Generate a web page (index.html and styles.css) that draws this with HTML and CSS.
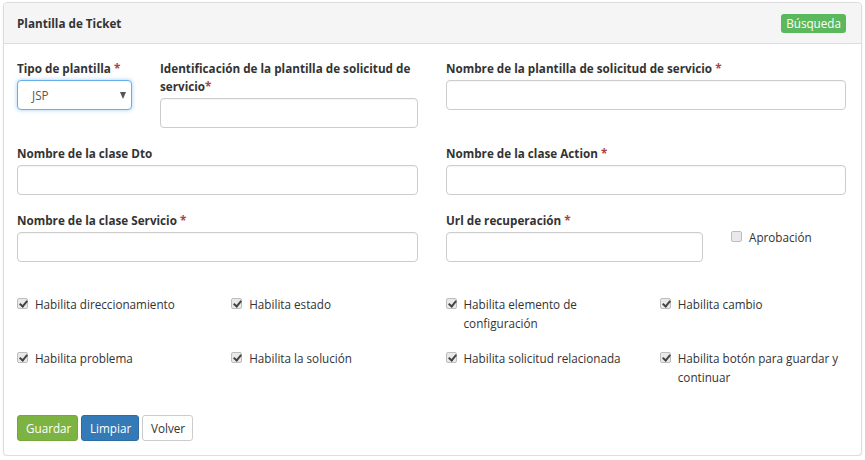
FILE: index.html
```html
<!DOCTYPE html>
<html lang="es">
<head>
<meta charset="utf-8">
<title>Plantilla de Ticket</title>
<link rel="stylesheet" href="styles.css">
</head>
<body>
<div class="panel">
  <div class="panel-heading">
    <span class="panel-title">Plantilla de Ticket</span>
    <span class="badge-search">Búsqueda</span>
  </div>
  <div class="panel-body">
    <div class="row">
      <div class="split split-left">
        <div class="field">
          <label class="lbl">Tipo de plantilla <span class="req">*</span></label>
          <div class="select"><span>JSP</span><span class="caret"></span></div>
        </div>
        <div class="field">
          <label class="lbl"><span class="lbl-line">Identificación de la plantilla de solicitud de</span> <span class="lbl-line">servicio<span class="req">*</span></span></label>
          <div class="input"></div>
        </div>
      </div>
      <div class="field">
        <label class="lbl">Nombre de la plantilla de solicitud de servicio <span class="req">*</span></label>
        <div class="input"></div>
      </div>
    </div>
    <div class="row">
      <div class="field">
        <label class="lbl">Nombre de la clase Dto</label>
        <div class="input"></div>
      </div>
      <div class="field">
        <label class="lbl">Nombre de la clase Action <span class="req">*</span></label>
        <div class="input"></div>
      </div>
    </div>
    <div class="row">
      <div class="field">
        <label class="lbl">Nombre de la clase Servicio <span class="req">*</span></label>
        <div class="input"></div>
      </div>
      <div class="split split-right">
        <div class="field">
          <label class="lbl">Url de recuperación <span class="req">*</span></label>
          <div class="input"></div>
        </div>
        <div class="field field-check">
          <label class="check"><span class="box"></span><span class="check-text">Aprobación</span></label>
        </div>
      </div>
    </div>
    <div class="checks">
      <label class="check"><span class="box checked"></span><span class="check-text">Habilita direccionamiento</span></label>
      <label class="check"><span class="box checked"></span><span class="check-text">Habilita estado</span></label>
      <label class="check"><span class="box checked"></span><span class="check-text">Habilita elemento de configuración</span></label>
      <label class="check"><span class="box checked"></span><span class="check-text">Habilita cambio</span></label>
      <label class="check"><span class="box checked"></span><span class="check-text">Habilita problema</span></label>
      <label class="check"><span class="box checked"></span><span class="check-text">Habilita la solución</span></label>
      <label class="check"><span class="box checked"></span><span class="check-text">Habilita solicitud relacionada</span></label>
      <label class="check"><span class="box checked"></span><span class="check-text">Habilita botón para guardar y continuar</span></label>
    </div>
    <div class="actions">
      <button class="btn btn-save">Guardar</button>
      <button class="btn btn-clear">Limpiar</button>
      <button class="btn btn-back">Volver</button>
    </div>
  </div>
</div>
</body>
</html>
```
FILE: styles.css
```css
* { box-sizing: border-box; }
html, body { background: #fff; }
body {
  margin: 0;
  padding: 2px 3px 0 3px;
  font-family: "Open Sans", "Liberation Sans", sans-serif;
  font-size: 11.7px;
  color: #333;
}
.panel {
  width: 859px;
  border: 1px solid #ddd;
  border-radius: 4px;
  box-shadow: 0 1px 2px rgba(0,0,0,0.08);
  background: #fff;
}
.panel-heading {
  height: 41px;
  background: #f5f5f5;
  border-bottom: 1px solid #ddd;
  border-radius: 4px 4px 0 0;
  display: flex;
  align-items: center;
  justify-content: space-between;
  padding: 0 15px 0 13px;
}
.panel-title { font-weight: 700; font-size: 11.7px; color: #333; }
.badge-search {
  background: #5cb85c;
  color: #fff;
  border-radius: 3px;
  height: 19px;
  line-height: 19px;
  padding: 0 5px;
  font-size: 11.7px;
}
.panel-body { padding: 15px 15px 14px 13px; }
.row {
  display: grid;
  grid-template-columns: 401px 400px;
  column-gap: 28px;
  margin-bottom: 16px;
}
.split { display: grid; column-gap: 28px; }
.split-left { grid-template-columns: 115px 258px; }
.split-right { grid-template-columns: 257px 115px; }
.lbl {
  display: block;
  font-weight: 700;
  line-height: 18px;
  margin-bottom: 3px;
  color: #333;
}
.lbl-line { white-space: nowrap; }
.req { color: #a94442; }
.input, .select {
  height: 30px;
  border: 1px solid #ccc;
  border-radius: 4px;
  background: #fff;
  box-shadow: inset 0 1px 1px rgba(0,0,0,0.04);
}
.select {
  border-color: #66afe9;
  box-shadow: 0 0 4px rgba(102,175,233,0.6);
  display: flex;
  align-items: center;
  justify-content: space-between;
  padding: 0 5px 0 14px;
  color: #555;
}
.caret {
  width: 0; height: 0;
  border-left: 3.5px solid transparent;
  border-right: 3.5px solid transparent;
  border-top: 7px solid #555;
}
.split-right .field-check { display: flex; align-items: flex-end; padding-bottom: 15px; }
.check {
  display: flex;
  align-items: flex-start;
  line-height: 19px;
  color: #333;
}
.box {
  flex: none;
  width: 11px;
  height: 11px;
  margin-top: 3px;
  margin-right: 7px;
  border: 1px solid #bdbdbd;
  border-radius: 2px;
  background: #e9e9e9;
  position: relative;
}
.box.checked::after {
  content: "";
  position: absolute;
  left: 3px;
  top: 0px;
  width: 3px;
  height: 6px;
  border-right: 2px solid #444;
  border-bottom: 2px solid #444;
  transform: rotate(40deg);
}
.check-text { display: block; }
.checks {
  display: grid;
  grid-template-columns: repeat(4, 1fr);
  column-gap: 28px;
  row-gap: 16px;
  margin-top: 33px;
  grid-auto-rows: 38px;
}
.actions {
  display: flex;
  gap: 3px;
  margin-top: 28px;
}
.btn {
  font-family: "Open Sans", "Liberation Sans", sans-serif;
  font-size: 11.7px;
  height: 26px;
  border-radius: 3px;
  border: 1px solid transparent;
  padding: 0 8px;
  color: #fff;
}
.btn-save { background: #7cb342; border-color: #73a83c; width: 61px; }
.btn-clear { background: #337ab7; border-color: #2e6da4; width: 58px; }
.btn-back { background: #fff; border-color: #ccc; color: #333; width: 51px; }
```
